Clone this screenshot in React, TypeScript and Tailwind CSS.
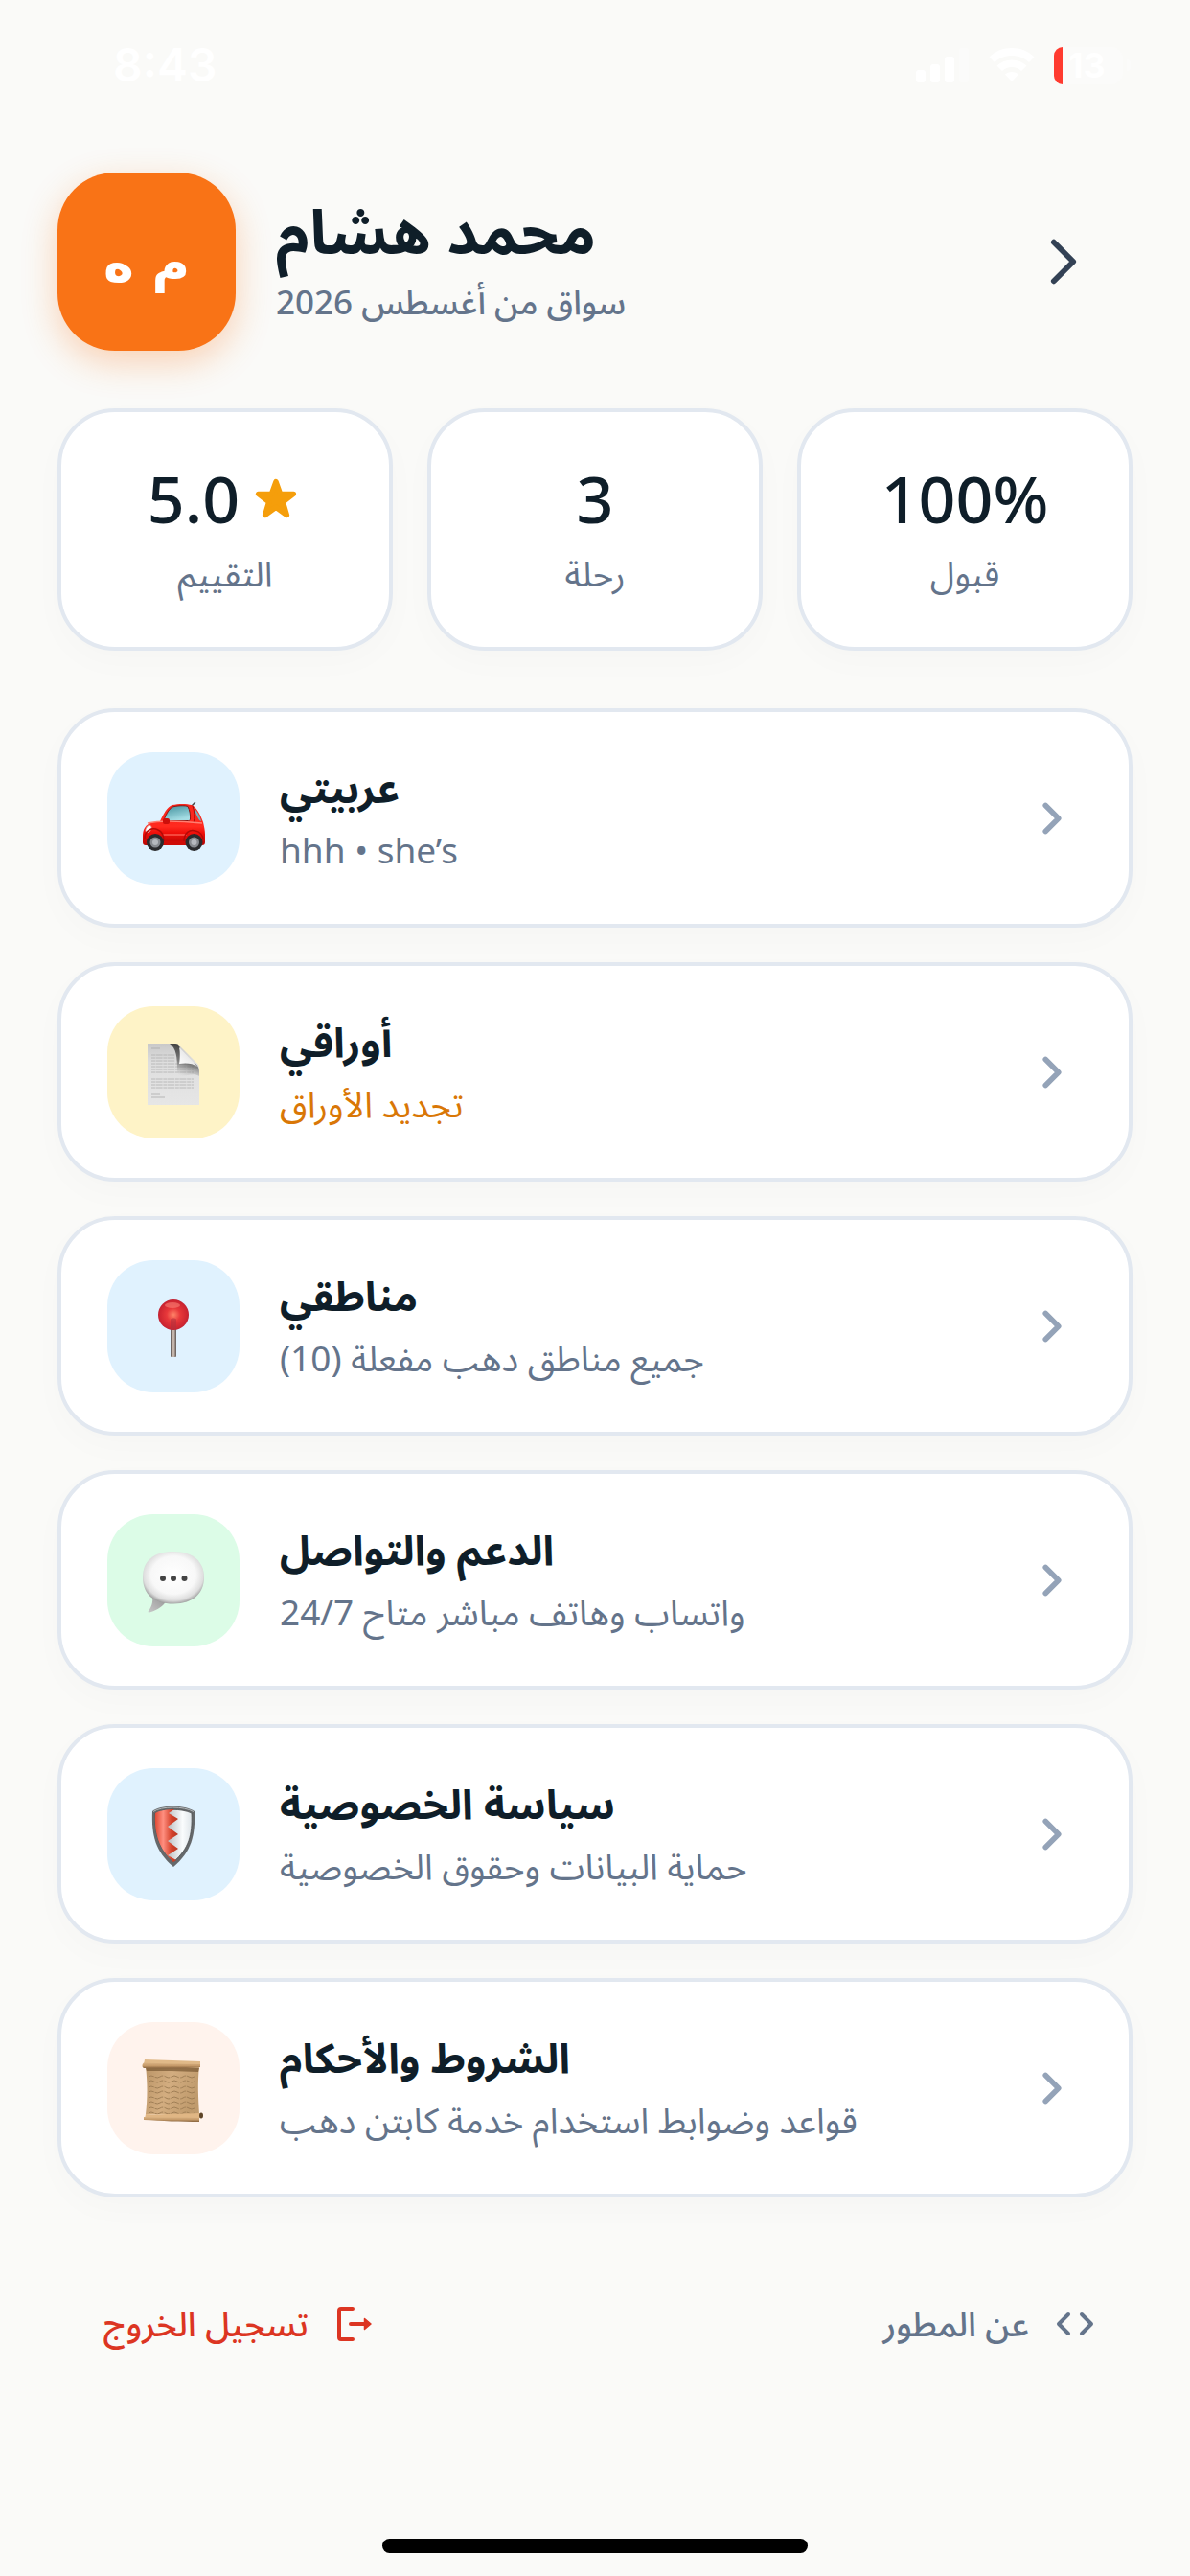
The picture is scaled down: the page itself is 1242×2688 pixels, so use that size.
import type { ReactNode } from "react";

const CarIcon = () => (
    <svg className="w-[66px] h-[66px]" viewBox="0 -14 66 66">
        <defs>
            <linearGradient id="carBody" x1="0" y1="0" x2="0" y2="1">
                <stop offset="0" stopColor="#f8261c" />
                <stop offset="0.55" stopColor="#ff2a1f" />
                <stop offset="0.7" stopColor="#ef0f0a" />
                <stop offset="1" stopColor="#b80603" />
            </linearGradient>
            <linearGradient id="carGlass" x1="0" y1="0" x2="0.4" y2="1">
                <stop offset="0" stopColor="#3f8f9c" />
                <stop offset="1" stopColor="#a5dde4" />
            </linearGradient>
        </defs>
        <path d="M52 4 55.500 0.500" stroke="#444" strokeWidth="1.500" strokeLinecap="round" />
        <path d="M1 42V36C1 29 3 23 12 21l7-1C23 12 26 5 32 3c6-1.500 15-1.500 20 0 5 2 9 10 12 18 1 4 2 9 2 13v8c0 2-1 3-3 3H4c-2 0-3-1-3-3Z" fill="url(#carBody)" />
        <path d="M23 19C26 11 29 5.500 34 4.500c5-1 12-1 14 0C50 8 51 14 50.500 18c0 1-1 1.500-2 1.500H24c-1 0-1.500 0-1-.5Z" fill="url(#carGlass)" stroke="#8c1410" strokeWidth="1" />
        <path d="M54 6c4 3 7 9 8 14-3-1-5-7-8-14Z" fill="#6fb4be" />
        <path d="M53 4c2 5 2.500 12 1 18" stroke="#a80b07" strokeWidth="1" fill="none" />
        <path d="M6 22c12-3 38-2 57 0" stroke="#ff7f72" strokeWidth="1.500" fill="none" />
        <path d="M22 34h25" stroke="#ff6d61" strokeWidth="1.200" />
        <path d="M22 41h26v4H22Z" fill="#cf0b06" />
        <rect x="22" y="17" width="7" height="6" rx="2" fill="#cc0f0b" />
        <ellipse cx="7" cy="28" rx="2.500" ry="4" fill="#fff" stroke="#d9a09c" strokeWidth="0.800" transform="rotate(28 7 28)" />
        <path d="M3 38c0-9 8-12 14-9 5 2 6 7 6 12M44 41c0-9 6-13 12-11 5 1 8 5 8 9" fill="none" stroke="#b30a07" strokeWidth="1.500" />
        <circle cx="14" cy="42" r="9" fill="#2a2b2d" />
        <circle cx="14" cy="42" r="5.500" fill="#888b90" />
        <circle cx="14" cy="42" r="3" fill="#b6b9be" />
        <circle cx="54.500" cy="42" r="9" fill="#2a2b2d" />
        <circle cx="54.500" cy="42" r="5.500" fill="#888b90" />
        <circle cx="54.500" cy="42" r="3" fill="#b6b9be" />
    </svg>
);

const paperLines = [12, 15, 18, 21, 24, 27, 30, 37, 40, 43, 46];

const PaperIcon = () => (
    <svg className="w-[56px] h-[64px]" viewBox="0 0 56 64">
        <defs>
            <linearGradient id="paper" x1="0" y1="0" x2="0" y2="1">
                <stop offset="0" stopColor="#c9c9c9" />
                <stop offset="0.3" stopColor="#dedede" />
                <stop offset="1" stopColor="#e6e6e6" />
            </linearGradient>
            <linearGradient id="paperShade" x1="0.700" y1="0" x2="0.400" y2="1">
                <stop offset="0" stopColor="#2e2e2e" />
                <stop offset="0.6" stopColor="#555" stopOpacity="0.7" />
                <stop offset="1" stopColor="#aaa" stopOpacity="0" />
            </linearGradient>
            <linearGradient id="paperCurl" x1="0" y1="1" x2="1" y2="0">
                <stop offset="0" stopColor="#fff" />
                <stop offset="1" stopColor="#d5d5d5" />
            </linearGradient>
        </defs>
        <path d="M1 0h28c5 0 6 3 6 3l17 17c3 2 3 5 3 8v36H1Z" fill="url(#paper)" />
        <path d="M5 5h9M5 53h9M5 56h14" stroke="#aaa" strokeWidth="0.800" />
        {paperLines.map(y => <path key={y} d={`M5 ${y}H${y < 20 ? 30 : 49}`} stroke="#b0b0b0" strokeWidth="0.800" strokeDasharray="4 0.600 7 0.800" />)}
        <path d="M24 0h6c4 0 5 3 5 8v12h12c5 0 8 4 8 10v4C50 30 41 34 34 34l-2-6C32 14 31 5 24 0Z" fill="url(#paperShade)" />
        <path d="M34 4c1 4 1 11 0 17 6-1 14-1 19 3Z" fill="url(#paperCurl)" />
    </svg>
);

const PinIcon = () => (
    <svg className="w-[34px] h-[62px]" viewBox="0 0 34 62">
        <defs>
            <radialGradient id="pinHead" cx="0.500" cy="0.500" r="0.550">
                <stop offset="0" stopColor="#ff8468" />
                <stop offset="0.4" stopColor="#e8383a" />
                <stop offset="0.85" stopColor="#cb2430" />
                <stop offset="1" stopColor="#a82a4a" />
            </radialGradient>
            <linearGradient id="pinNeedle" x1="0" x2="1" y1="0" y2="0">
                <stop offset="0" stopColor="#5b5350" />
                <stop offset="0.5" stopColor="#d8c8bd" />
                <stop offset="1" stopColor="#5d5552" />
            </linearGradient>
        </defs>
        <rect x="14" y="30" width="6" height="31" rx="1" fill="url(#pinNeedle)" />
        <circle cx="17" cy="17" r="16" fill="url(#pinHead)" />
        <ellipse cx="16" cy="7" rx="8" ry="3" fill="#ff8f82" opacity="0.500" />
        <path d="M14 22c0-2 6-2 6 0v10h-6Z" fill="#b3303c" opacity="0.600" />
    </svg>
);

const SpeechIcon = () => (
    <svg className="w-[66px] h-[66px]" viewBox="0 0 66 66">
        <defs>
            <radialGradient id="bubble" cx="0.500" cy="0.450" r="0.560">
                <stop offset="0" stopColor="#fff" />
                <stop offset="0.65" stopColor="#f8f8f8" />
                <stop offset="0.87" stopColor="#dedede" />
                <stop offset="1" stopColor="#9d9d9d" />
            </radialGradient>
            <linearGradient id="bubbleTail" x1="0" x2="1" y1="1" y2="0">
                <stop offset="0" stopColor="#c9c9c9" />
                <stop offset="1" stopColor="#929292" />
            </linearGradient>
        </defs>
        <path d="M11 48c1 6-1 11-4 15-1 1 0 2 1 1.500C17 62 22 58 26 52Z" fill="url(#bubbleTail)" />
        <path d="M33 1c21 0 32 11 32 27S54 55.500 33 55.500 1 45 1 28 12 1 33 1Z" fill="url(#bubble)" />
        <circle cx="22" cy="29" r="3" fill="#444" />
        <circle cx="33" cy="29" r="3" fill="#444" />
        <circle cx="44.500" cy="29" r="3" fill="#444" />
    </svg>
);

const ShieldIcon = () => (
    <svg className="w-[46px] h-[66px]" viewBox="0 0 46 66">
        <defs>
            <linearGradient id="shieldRed" x1="0" x2="1" y1="0" y2="0">
                <stop offset="0" stopColor="#e04a35" />
                <stop offset="0.35" stopColor="#ff8f80" />
                <stop offset="0.7" stopColor="#d5432c" />
                <stop offset="1" stopColor="#b8351f" />
            </linearGradient>
            <linearGradient id="shieldWhite" x1="0" x2="1" y1="0" y2="0">
                <stop offset="0" stopColor="#a9adb0" />
                <stop offset="0.4" stopColor="#c3c7ca" />
                <stop offset="0.75" stopColor="#fafcfd" />
                <stop offset="1" stopColor="#dfe5e9" />
            </linearGradient>
        </defs>
        <path d="M1 7C9 0 35 0 45 7c1 25-3 42-22 58C4 49 0 32 1 7Z" fill="#65686a" />
        <path d="M2 7.500C10 1.500 34 1.500 44 7.500" stroke="#b5b9bb" fill="none" />
        <path d="M4 9c8-5 28-5 38 0 1 23-3 37-19 51C8 46 3 31 4 9Z" fill="url(#shieldWhite)" stroke="#4a4c4e" strokeWidth="0.800" />
        <path d="M4 9c5-3 13-4 20-4l-6 4 10 6-11 8 11 8-11 7 11 8-11 7 9 5-3 2C8 46 3 31 4 9Z" fill="url(#shieldRed)" />
    </svg>
);

const scrollLines = [19, 24, 30, 35, 41, 46, 52, 57];

const ScrollIcon = () => (
    <svg className="w-[66px] h-[66px]" viewBox="0 0 66 66">
        <defs>
            <linearGradient id="scrollPaper" x1="0" x2="1" y1="0" y2="0.300">
                <stop offset="0" stopColor="#bb9567" />
                <stop offset="0.5" stopColor="#d3ad80" />
                <stop offset="1" stopColor="#c09b6d" />
            </linearGradient>
            <linearGradient id="scrollRoll" x1="0" x2="0" y1="0" y2="1">
                <stop offset="0" stopColor="#d9b283" />
                <stop offset="0.55" stopColor="#c59a69" />
                <stop offset="1" stopColor="#85613c" />
            </linearGradient>
        </defs>
        <path d="M4 8h56c-2 18-1 32 0 50H4c2-17 2-32 0-50Z" fill="url(#scrollPaper)" />
        <path d="M4 10h56l-1 4C40 13 20 13 5 13Z" fill="#775732" opacity="0.700" />
        {scrollLines.map(y => <path key={y} d={`M7 ${y}q3-2 6 0t6 0 6 0 6 0 6 0 6 0 6 0 6 0`} stroke="#9b7a52" strokeWidth="0.900" strokeDasharray="6 1 9 1.500" fill="none" />)}
        <path d="M3 1 61 3v6L2 6Z" fill="#e0b988" />
        <path d="M2 4.500c18 1 40 1 59 1.500v3c-18 2-40 1-59 1-2-1-2-4 0-5.500Z" fill="url(#scrollRoll)" />
        <path d="M4 58c20 1 38-1 58-1 2 1 2 4 0 5-20 2-38 0-59 1Z" fill="#e0b684" />
        <path d="M2 61c18 1 40 0 58 1v4c-19 0-40-1-58-2Z" fill="url(#scrollRoll)" />
        <ellipse cx="62" cy="59.500" rx="2" ry="3" fill="#5f4529" />
    </svg>
);

const Chevron = ({ className, stroke }: { className: string, stroke: number }) => (
    <svg className={className} viewBox="0 0 512 512" fill="none" stroke="currentColor" strokeWidth={stroke} strokeLinecap="round" strokeLinejoin="round">
        <path d="m184 112 144 144-144 144" />
    </svg>
);

const StatusBar = () => (
    <div className="flex items-center justify-between h-[136px] pl-[118px] pr-[62px] text-white font-['Inter',sans-serif]">
        <span className="text-[48px] leading-[60px] font-semibold">8:43</span>
        <div className="flex items-center gap-5">
            <svg className="w-14 h-9" viewBox="0 0 56 36" fill="currentColor">
                <rect x="0" y="23" width="10" height="13" rx="3" />
                <rect x="15" y="17" width="10" height="19" rx="3" />
                <rect x="30" y="9" width="10" height="27" rx="3" />
                <rect x="45" y="0" width="10" height="36" rx="3" opacity="0.300" />
            </svg>
            <svg className="w-12 h-9" viewBox="0 0 48 36" fill="currentColor">
                <path d="M24 0c9 0 17 3 23.500 9.500L42 15C37 10.500 31 8 24 8S11 10.500 6 15L.5 9.500C7 3 15 0 24 0Z" />
                <path d="M24 12.500c6 0 11 2 15.500 6L34 24c-3-2.500-6-4-10-4s-7 1.500-10 4l-5.500-5.500C13 14.500 18 12.500 24 12.500Z" />
                <path d="M24 25c3 0 5 1 7 2.500L24 35l-7-7.500C19 26 21 25 24 25Z" />
            </svg>
            <div className="flex items-center">
                <div className="flex items-center w-[72px] h-[39px] rounded-xl bg-[#fbfbfa]">
                    <span className="w-[9px] h-[39px] rounded-l-[9px] bg-[#ff3b30]"></span>
                    <span className="ml-1.5 text-[36px] leading-[48px] font-bold">13</span>
                </div>
                <span className="w-1 h-3 ml-1 rounded-r-full bg-[#fbfbfa]"></span>
            </div>
        </div>
    </div>
);

const StatCard = ({ value, label, icon }: { value: string, label: string, icon?: ReactNode }) => (
    <div className="flex flex-col items-center flex-1 pt-12 pb-[42px] rounded-[60px] border-4 border-[#e2e8f0] bg-white shadow-[0_12px_36px_rgba(15,23,42,0.02)]">
        <div className="flex items-center gap-4">
            <span className="text-[68px] leading-[84px] font-medium text-[#0f1e29]">{value}</span>
            {icon}
        </div>
        <span dir="rtl" className="text-[37px] leading-[71px] text-[#64748b]">{label}</span>
    </div>
);

const menu = [
    { title: "عربيتي", subtitle: "hhh • she’s", tile: "bg-[#e0f2fe]", color: "text-[#64748b]", icon: <CarIcon /> },
    { title: "أوراقي", subtitle: "تجديد الأوراق", tile: "bg-[#fef3c7]", color: "text-[#d97706]", icon: <PaperIcon /> },
    { title: "مناطقي", subtitle: "جميع مناطق دهب مفعلة (10)", tile: "bg-[#e0f2fe]", color: "text-[#64748b]", icon: <PinIcon /> },
    { title: "الدعم والتواصل", subtitle: "واتساب وهاتف مباشر متاح 24/7", tile: "bg-[#dcfce7]", color: "text-[#64748b]", icon: <SpeechIcon /> },
    { title: "سياسة الخصوصية", subtitle: "حماية البيانات وحقوق الخصوصية", tile: "bg-[#e0f2fe]", color: "text-[#64748b]", icon: <ShieldIcon /> },
    { title: "الشروط والأحكام", subtitle: "قواعد وضوابط استخدام خدمة كابتن دهب", tile: "bg-[#fff3ed]", color: "text-[#64748b]", icon: <ScrollIcon /> }
];

export default function App() {
    return <div className="flex flex-col min-h-screen bg-[#fafaf8] font-['Noto_Sans','Noto_Sans_Arabic','DejaVu_Sans',sans-serif]">
        <StatusBar />
        <main className="px-[60px] pt-11">
            <button className="flex items-center w-full gap-[42px] pr-9 text-left">
                <span dir="rtl" className="flex items-center justify-center shrink-0 w-[186px] h-[186px] pt-1 rounded-[60px] bg-[#f97316] text-white text-[54px] leading-[90px] font-['DejaVu_Sans',sans-serif] font-semibold shadow-[0_12px_36px_rgba(249,115,22,0.3)]">م ه</span>
                <span className="flex flex-col items-start flex-1">
                    <span dir="rtl" className="text-[64px] leading-[84px] font-bold text-[#0f1e29]">محمد هشام</span>
                    <span dir="rtl" className="text-[35px] leading-[64px] font-medium text-[#64748b]">سواق من أغسطس 2026</span>
                </span>
                <Chevron className="w-[72px] h-[72px] text-[#334155]" stroke={42} />
            </button>
            <section className="flex gap-9 mt-[60px]">
                <StatCard value="5.0" label="التقييم" icon={
                    <svg className="w-11 h-11 mr-1.5" viewBox="0 0 24 24" fill="#f59e0b" stroke="#f59e0b" strokeWidth="3" strokeLinejoin="round">
                        <path d="m12 2.500 2.500 7h7.500l-6 4.600 2.200 7.400-6.200-4.500-6.200 4.500L8 14.100 2 9.500h7.500Z" />
                    </svg>
                } />
                <StatCard value="3" label="رحلة" />
                <StatCard value="100%" label="قبول" />
            </section>
            <nav className="flex flex-col gap-9 mt-[60px]">
                {menu.map(item => <button key={item.title} className="flex items-center gap-[42px] pt-[42px] pb-[41px] pl-12 pr-14 rounded-[60px] border-4 border-[#e2e8f0] bg-white text-left shadow-[0_12px_36px_rgba(15,23,42,0.02)]">
                    <span className={`flex items-center justify-center shrink-0 w-[138px] h-[138px] pt-1 rounded-[48px] ${item.tile}`}>{item.icon}</span>
                    <span className="flex flex-col items-start flex-1">
                        <span dir="rtl" className="text-[43px] leading-[66px] font-bold text-[#0f1e29]">{item.title}</span>
                        <span dir="auto" className={`text-[37px] leading-[64px] ${item.color}`}>{item.subtitle}</span>
                    </span>
                    <Chevron className="w-12 h-12 text-[#94a3b8]" stroke={60} />
                </button>)}
            </nav>
            <footer className="flex items-center justify-between mt-[96px] pl-12 pr-10 text-[36px] leading-[72px] font-medium">
                <button className="flex items-center gap-[30px] text-[#dc3522]">
                    <span dir="rtl">تسجيل الخروج</span>
                    <svg className="w-9 h-9" viewBox="0 0 36 36" fill="none" stroke="currentColor" strokeWidth="4" strokeLinecap="round" strokeLinejoin="round">
                        <path d="M16 2H4a2 2 0 0 0-2 2v28a2 2 0 0 0 2 2h12M14 18h15" />
                        <path d="M28.500 12.500 35 18l-6.500 5.500Z" fill="currentColor" strokeWidth="1.500" />
                    </svg>
                </button>
                <button className="flex items-center gap-7 text-[#64748b]">
                    <span dir="rtl">عن المطور</span>
                    <svg className="w-10 h-10" viewBox="0 0 40 40" fill="none" stroke="currentColor" strokeWidth="4" strokeLinecap="round" strokeLinejoin="round">
                        <path d="M13 10 3 20l10 10M27 10l10 10-10 10" />
                    </svg>
                </button>
            </footer>
        </main>
        <div className="mt-auto mx-auto mb-6 w-[444px] h-[15px] rounded-full bg-black"></div>
    </div>
}
